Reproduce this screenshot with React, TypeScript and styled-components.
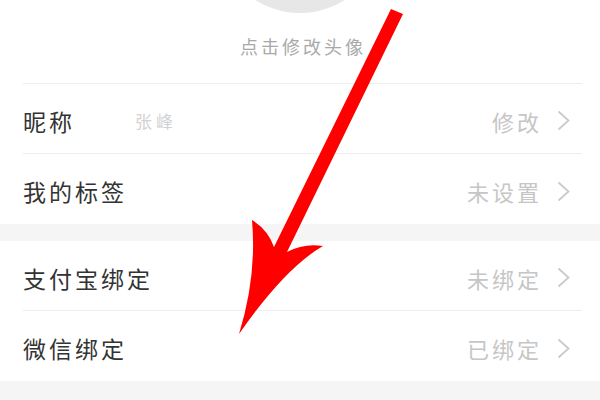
import styled, { createGlobalStyle } from 'styled-components';

const GlobalStyle = createGlobalStyle`
  html, body {
    margin: 0;
    padding: 0;
    background: #ffffff;
  }
  body {
    font-family: "Noto Sans CJK SC", "Noto Sans", sans-serif;
  }
`;

const items = [
  [
    { label: '昵称', sub: '张峰', value: '修改' },
    { label: '我的标签', value: '未设置' },
  ],
  [
    { label: '支付宝绑定', value: '未绑定' },
    { label: '微信绑定', value: '已绑定' },
  ],
];

const Chevron = () => (
  <svg width="13" height="21" viewBox="0 0 13 21">
    <polyline points="1.5,1.5 11.5,10.5 1.5,19.5" fill="none" stroke="#cacaca" strokeWidth="1.8" />
  </svg>
);

const Arrow = () => (
  <ArrowLayer width="600" height="400" viewBox="0 0 600 400">
    <path
      d="M391,9 L403,14 L287,252 Q304,243 323,246 Q285,268 239,334 Q257,276 252,220 Q268,230 274,247 Z"
      fill="#ff0000"
    />
  </ArrowLayer>
);

const App = () => {
  return (
    <Page>
      <GlobalStyle />
      <AvatarBox>
        <Avatar />
        <p>点击修改头像</p>
      </AvatarBox>
      {items.map((group, gi) => (
        <Group key={gi} first={gi === 0}>
          {group.map((item, i) => (
            <Row key={item.label} top={gi === 0 && i === 0} last={i === group.length - 1}>
              <Label>{item.label}</Label>
              {item.sub && <Sub>{item.sub}</Sub>}
              <Value>{item.value}</Value>
              <Chevron />
            </Row>
          ))}
        </Group>
      ))}
      <Arrow />
    </Page>
  );
};

const Page = styled.div`
  position: relative;
  width: 600px;
  height: 400px;
  overflow: hidden;
  background: #f5f5f5;
`;

const AvatarBox = styled.div`
  display: flex;
  flex-direction: column;
  align-items: center;
  height: 83px;
  background: #ffffff;
  p {
    margin: 23px 0 0 6px;
    font-size: 18px;
    line-height: 20px;
    letter-spacing: 3px;
    color: #a9a9a9;
  }
`;

const Avatar = styled.div`
  width: 168px;
  height: 168px;
  margin-top: -155px;
  border-radius: 50%;
  background: #e7e7e7;
  flex-shrink: 0;
`;

const Group = styled.div<{ first?: boolean }>`
  background: #ffffff;
  margin-top: ${(p) => (p.first ? '0' : '17px')};
  padding: 0 18px 0 23px;
`;

const Row = styled.div<{ top?: boolean; last?: boolean }>`
  display: flex;
  align-items: center;
  height: ${(p) => (p.top ? '71px' : '70px')};
  padding: 4px 12px 0 0;
  box-sizing: border-box;
  border-top: ${(p) => (p.top ? '1px solid #ededed' : 'none')};
  border-bottom: ${(p) => (p.last ? 'none' : '1px solid #ededed')};
`;

const Label = styled.span`
  font-size: 23px;
  letter-spacing: 3px;
  color: #333333;
`;

const Sub = styled.span`
  margin-left: 60px;
  font-size: 17px;
  letter-spacing: 4px;
  color: #d2d2d2;
`;

const Value = styled.span`
  margin-left: auto;
  margin-right: 15px;
  font-size: 22px;
  letter-spacing: 3px;
  color: #c6c6c6;
`;

const ArrowLayer = styled.svg`
  position: absolute;
  top: 0;
  left: 0;
  pointer-events: none;
`;

export default App;
